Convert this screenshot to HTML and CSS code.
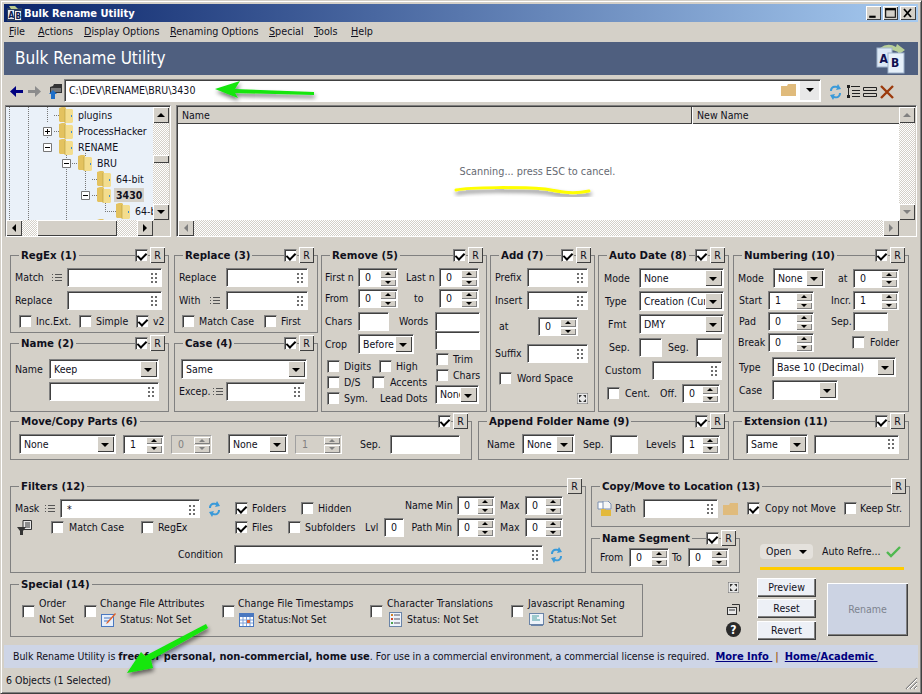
FILE: index.html
```html
<!DOCTYPE html>
<html lang="en">
<head>
<meta charset="utf-8">
<title>Bulk Rename Utility</title>
<link rel="stylesheet" href="styles.css">
</head>
<body>
<svg class="defs" width="0" height="0" aria-hidden="true">
  <symbol id="grip" viewBox="0 0 6 10"><path d="M0 0h2v2H0zM4 0h2v2H4zM0 4h2v2H0zM4 4h2v2H4zM0 8h2v2H0zM4 8h2v2H4z" fill="#6e6e6e"/></symbol>
  <symbol id="list" viewBox="0 0 10 8"><path d="M0 0h1v1H0zM3 0h7v1H3zM0 3h1v1H0zM3 3h7v1H3zM0 6h1v1H0zM3 6h7v1H3z" fill="#555"/></symbol>
  <symbol id="tfolder" viewBox="0 0 14 16"><path d="M0 1l3-1h3l1 1v14H1l-1-1z" fill="#e3c25f"/><path d="M6 2h7l1 1v12l-1 1H6z" fill="#f3dd8e"/><path d="M6 2v14" stroke="#b79a3c" stroke-width=".6"/><rect x="12" y="8" width="1" height="2" fill="#3a8ad0"/></symbol>
  <symbol id="refresh" viewBox="0 0 13 16"><path d="M1 7C1 3 4 1 8 2l1-2 3 5-5 1 1-2C5 3 3 4 3 7z" fill="#3a9ad9"/><path d="M12 9c0 4-3 6-7 5l-1 2-3-5 5-1-1 2c3 1 5 0 5-3z" fill="#3a9ad9"/></symbol>
  <symbol id="fit" viewBox="0 0 11 11"><rect width="11" height="11" fill="#e8e8e8"/><path d="M0 0h11v11H0z" fill="none" stroke="#666"/><path d="M2 2h3L2 5zM9 2v3L6 2zM2 9V6l3 3zM9 9H6l3-3z" fill="#333"/></symbol>
  <symbol id="flat" viewBox="0 0 15 12"><path d="M0 2h6l1-2h8v12H0z" fill="#e0bb7c"/></symbol>
</svg>
<div class="window">
  <header class="titlebar">
    <svg class="appicon" viewBox="0 0 15 15"><rect y="2" width="15" height="13" fill="#2b3e5f"/><rect x="1" y="4" width="6" height="9" fill="#dfe6ef"/><rect x="8" y="5" width="6" height="9" fill="#f2f2f2"/><path d="M2 0h6l3 3H4z" fill="#b9c98e"/><text x="1.5" y="11.5" class="appA">A</text><text x="8.5" y="12.5" class="appA">B</text></svg>
    <span class="titletext">Bulk Rename Utility</span>
    <span class="winbtns">
      <span class="wb"><svg viewBox="0 0 14 13"><rect x="3" y="9" width="6" height="2" fill="#000"/></svg></span>
      <span class="wb"><svg viewBox="0 0 14 13"><path d="M2.5 2.5h9v8h-9z" fill="none" stroke="#000"/><rect x="2" y="2" width="10" height="2"/></svg></span>
      <span class="wb wbx"><svg viewBox="0 0 16 13"><path d="M4 2.5l7 8M11 2.5l-7 8" stroke="#000" stroke-width="1.8"/></svg></span>
    </span>
  </header>
  <nav class="menubar">
    <span class="w-29"><u>F</u>ile</span><span class="w-46"><u>A</u>ctions</span><span class="w-86"><u>D</u>isplay Options</span><span class="w-99"><u>R</u>enaming Options</span><span class="w-45"><u>S</u>pecial</span><span class="w-37"><u>T</u>ools</span><span><u>H</u>elp</span>
  </nav>
  <div class="banner">
    <span class="bannertext">Bulk Rename Utility</span>
    <svg class="abicon" viewBox="0 0 30 30">
      <path d="M4 4q8-6 16-1l1-3 8 6-7 5v-3q-8-4-15 0z" fill="#b8cf98"/>
      <rect x="1" y="4" width="15" height="19" fill="#dce8f6" stroke="#9fb3cc"/>
      <rect x="12" y="9" width="16" height="20" fill="#e6f0fa" stroke="#9fb3cc"/>
      <text x="3.5" y="19" class="abA">A</text><text x="15" y="23" class="abA">B</text>
    </svg>
  </div>
  <div class="toolbar">
    <svg class="tool-back" viewBox="0 0 13 11"><path d="M0 5.5L6 0v4h7v3H6v4z" fill="#000080"/></svg>
    <svg class="tool-fwd" viewBox="0 0 13 11"><path d="M13 5.5L7 0v4H0v3h7v4z" fill="#8c8c8c"/></svg>
    <svg class="tool-up" viewBox="0 0 15 15"><path d="M2 3l3-1 1-2h8v9H2z" fill="#333"/><path d="M3 4h10v4H3z" fill="#777"/><path d="M5 6l4 4H7v5H3v-5H1z" fill="#1f6fc8"/></svg>
    <div class="address">
      <span class="addrtext">C:\DEV\RENAME\BRU\3430</span>
      <svg class="addrfolder"><use href="#flat"/></svg>
      <span class="addrdrop"><i class="tri"></i></span>
    </div>
    <svg class="tool-ref"><use href="#refresh"/></svg>
    <svg class="tool-tree" viewBox="0 0 13 14"><path d="M0 0h3v3H0zM0 10h3v3H0zM4 1h9v1H4zM5 5h8v1H5zM5 8h8v1H5zM5 11h8v1H5zM1 3h1v7H1z" fill="#222"/></svg>
    <svg class="tool-rows" viewBox="0 0 14 10"><path d="M.5.5h13v3H.5zM.5 6.5h13v3H.5z" fill="#d4d0c8" stroke="#222"/></svg>
    <svg class="tool-x" viewBox="0 0 14 14"><path d="M1 1l12 12M13 1L1 13" stroke="#9c3a0c" stroke-width="2.4"/></svg>
  </div>
  <div class="panes">
    <div class="pane tree">
      <div class="treeview">
        <svg class="treelines" width="147" height="113" viewBox="0 0 147 113">
          <path d="M3.5 0v113M22.5 0v113M41.5 0v16M41.5 30v2M60.5 46v67M79.5 46v38M99.5 94v9M48 8.5h5M48 24.5h5M86 72.5h5M66 56.5h5M86 88.5h5M99 104.5h11" stroke="#777" stroke-dasharray="1 1" fill="none"/>
          <path d="M37.5 20.5h8v8h-8zM37.5 36.5h8v8h-8zM56.5 52.5h8v8h-8zM75.5 84.5h8v8h-8z" fill="#fff" stroke="#777"/>
          <path d="M39 24.5h5M41.5 22v5M39 40.5h5M58 56.5h5M77 88.5h5" stroke="#000"/>
        </svg>
        <div class="node d1"><svg class="tf"><use href="#tfolder"/></svg><span class="nl">plugins</span></div>
        <div class="node d1"><svg class="tf"><use href="#tfolder"/></svg><span class="nl">ProcessHacker</span></div>
        <div class="node d1"><svg class="tf"><use href="#tfolder"/></svg><span class="nl">RENAME</span></div>
        <div class="node d2"><svg class="tf"><use href="#tfolder"/></svg><span class="nl">BRU</span></div>
        <div class="node d3"><svg class="tf"><use href="#tfolder"/></svg><span class="nl">64-bit</span></div>
        <div class="node d3"><svg class="tf"><use href="#tfolder"/></svg><span class="nl sel-node">3430</span></div>
        <div class="node d4"><svg class="tf"><use href="#tfolder"/></svg><span class="nl">64-bit</span></div>
        <div class="node d2b"><svg class="tf"><use href="#tfolder"/></svg></div>
      </div>
      <div class="vscroll">
        <span class="sbtn"><i class="tri up"></i></span>
        <span class="thumb-v"></span>
        <span class="sbtn end"><i class="tri"></i></span>
      </div>
      <div class="hscroll">
        <span class="sbtn"><i class="tri lf"></i></span>
        <span class="thumb-h"></span>
        <span class="sbtn end"><i class="tri rt"></i></span>
      </div>
      <div class="corner"></div>
    </div>
    <div class="pane list">
      <div class="listmain">
        <div class="listhead"><span class="colname">Name</span><span class="colnew">New Name</span></div>
        <div class="listbody">Scanning... press ESC to cancel.</div>
      </div>
      <div class="vscroll">
        <span class="sbtn"><i class="tri up dim"></i></span>
        <span class="sbtn end"><i class="tri dim"></i></span>
      </div>
      <div class="hscroll">
        <span class="sbtn"><i class="tri lf dim"></i></span>
        <span class="sbtn end"><i class="tri rt dim"></i></span>
      </div>
      <div class="corner"></div>
    </div>
  </div>

  <main class="panels">
    <section class="row-main">
      <div class="grid-left">
        <div class="panel p-regex">
          <span class="ttl">RegEx (1)</span><span class="ctl"><i class="cb on"></i><span class="rb">R</span></span>
          <div class="r"><span class="l ml-4 w-37">Match</span><svg class="li"><use href="#list"/></svg><span class="tb ml-5 w-95"><svg class="gr"><use href="#grip"/></svg></span></div>
          <div class="r mt-4"><span class="l ml-4 w-52">Replace</span><span class="tb w-95"><svg class="gr"><use href="#grip"/></svg></span></div>
          <div class="r mt-5"><i class="cb ml-8"></i><span class="l ml-4 w-39">Inc.Ext.</span><i class="cb ml-4"></i><span class="l ml-4 w-40">Simple</span><i class="cb on"></i><span class="l ml-4">v2</span></div>
        </div>
        <div class="panel p-replace">
          <span class="ttl">Replace (3)</span><span class="ctl"><i class="cb on"></i><span class="rb">R</span></span>
          <div class="r"><span class="l ml-4 w-47">Replace</span><span class="tb w-82"><svg class="gr"><use href="#grip"/></svg></span></div>
          <div class="r mt-4"><span class="l ml-4 w-31">With</span><svg class="li"><use href="#list"/></svg><span class="tb ml-6 w-82"><svg class="gr"><use href="#grip"/></svg></span></div>
          <div class="r mt-5"><i class="cb ml-7"></i><span class="l ml-4 w-65">Match Case</span><i class="cb"></i><span class="l ml-4">First</span></div>
        </div>
        <div class="panel p-name">
          <span class="ttl">Name (2)</span><span class="ctl"><i class="cb on"></i><span class="rb">R</span></span>
          <div class="r"><span class="l ml-4 w-34">Name</span><span class="sel w-110">Keep<i class="arrow"></i></span></div>
          <div class="r mt-3"><span class="tb ml-38 w-110"><svg class="gr"><use href="#grip"/></svg></span></div>
        </div>
        <div class="panel p-name">
          <span class="ttl">Case (4)</span><span class="ctl"><i class="cb on"></i><span class="rb">R</span></span>
          <div class="r"><span class="sel ml-6 w-126">Same<i class="arrow"></i></span></div>
          <div class="r mt-3"><span class="l ml-4 w-34">Excep.</span><svg class="li"><use href="#list"/></svg><span class="tb ml-3 w-79"><svg class="gr"><use href="#grip"/></svg></span></div>
        </div>
      </div>

      <div class="panel p-remove">
        <span class="ttl">Remove (5)</span><span class="ctl"><i class="cb on"></i><span class="rb">R</span></span>
        <div class="r"><span class="l ml-3 w-33">First n</span><span class="spin w-40">0<b class="sb"><i></i><i></i></b></span><span class="l ml-8 w-33">Last n</span><span class="spin w-40">0<b class="sb"><i></i><i></i></b></span></div>
        <div class="r mt-2"><span class="l ml-3 w-33">From</span><span class="spin w-40">0<b class="sb"><i></i><i></i></b></span><span class="l ml-16 w-25">to</span><span class="spin w-40">0<b class="sb"><i></i><i></i></b></span></div>
        <div class="r mt-4"><span class="l ml-3 w-33">Chars</span><span class="tb w-31"></span><span class="l ml-10 w-36">Words</span><span class="tb w-45"></span></div>
        <div class="rem-split">
          <div class="rem-left">
            <div class="r mt-3"><span class="l ml-3 w-33">Crop</span><span class="sel w-56">Before<i class="arrow"></i></span></div>
            <div class="r mt-6"><i class="cb ml-5"></i><span class="l ml-4 w-35">Digits</span><i class="cb"></i><span class="l ml-4">High</span></div>
            <div class="r mt-3"><i class="cb ml-5"></i><span class="l ml-4 w-28">D/S</span><i class="cb"></i><span class="l ml-5">Accents</span></div>
            <div class="r mt-3"><i class="cb ml-5"></i><span class="l ml-4 w-36">Sym.</span><span class="l">Lead Dots</span></div>
          </div>
          <div class="rem-right">
            <div class="r"><span class="tb w-45"></span></div>
            <div class="r mt-3"><i class="cb ml-1"></i><span class="l ml-4">Trim</span></div>
            <div class="r mt-3"><i class="cb ml-1"></i><span class="l ml-4">Chars</span></div>
            <div class="r mt-3"><span class="sel w-44 h-19"><span class="clip">None</span><i class="arrow"></i></span></div>
          </div>
        </div>
      </div>

      <div class="panel p-add">
        <span class="ttl">Add (7)</span><span class="ctl"><i class="cb on"></i><span class="rb">R</span></span>
        <div class="r"><span class="l ml-4 w-32">Prefix</span><span class="tb w-61"><svg class="gr"><use href="#grip"/></svg></span></div>
        <div class="r mt-4"><span class="l ml-4 w-32">Insert</span><span class="tb w-61"><svg class="gr"><use href="#grip"/></svg></span></div>
        <div class="r mt-7"><span class="l ml-8 w-39">at</span><span class="spin w-40">0<b class="sb"><i></i><i></i></b></span></div>
        <div class="r mt-8"><span class="l ml-4 w-32">Suffix</span><span class="tb w-61"><svg class="gr"><use href="#grip"/></svg></span></div>
        <div class="r mt-9"><i class="cb ml-8"></i><span class="l ml-5">Word Space</span></div>
        <div class="r mt-8"><svg class="fit ml-86"><use href="#fit"/></svg></div>
      </div>

      <div class="panel p-date">
        <span class="ttl">Auto Date (8)</span><span class="ctl"><i class="cb on"></i><span class="rb">R</span></span>
        <div class="r"><span class="l ml-5 w-35">Mode</span><span class="sel w-85">None<i class="arrow"></i></span></div>
        <div class="r mt-3"><span class="l ml-6 w-34">Type</span><span class="sel w-85"><span class="clip">Creation (Current)</span><i class="arrow"></i></span></div>
        <div class="r mt-3"><span class="l ml-9 w-31">Fmt</span><span class="sel w-85">DMY<i class="arrow"></i></span></div>
        <div class="r mt-4"><span class="l ml-10 w-30">Sep.</span><span class="tb w-23"></span><span class="l ml-6 w-28">Seg.</span><span class="tb w-26"></span></div>
        <div class="r mt-4"><span class="l ml-6 w-47">Custom</span><span class="tb w-70"><svg class="gr"><use href="#grip"/></svg></span></div>
        <div class="r mt-4"><i class="cb ml-8"></i><span class="l ml-5 w-35">Cent.</span><span class="l w-22">Off.</span><span class="spin w-38">0<b class="sb"><i></i><i></i></b></span></div>
      </div>

      <div class="panel p-num">
        <span class="ttl">Numbering (10)</span><span class="ctl"><i class="cb on"></i><span class="rb">R</span></span>
        <div class="r"><span class="l ml-4 w-35">Mode</span><span class="sel w-52">None<i class="arrow"></i></span><span class="l ml-13 w-15">at</span><span class="spin w-46">0<b class="sb"><i></i><i></i></b></span></div>
        <div class="r mt-3"><span class="l ml-5 w-29">Start</span><span class="spin w-46">1<b class="sb"><i></i><i></i></b></span><span class="l ml-17 w-22">Incr.</span><span class="spin w-46">1<b class="sb"><i></i><i></i></b></span></div>
        <div class="r mt-2"><span class="l ml-5 w-29">Pad</span><span class="spin w-46">0<b class="sb"><i></i><i></i></b></span><span class="l ml-17 w-22">Sep.</span><span class="tb w-35"></span></div>
        <div class="r mt-2"><span class="l ml-4 w-30">Break</span><span class="spin w-46">0<b class="sb"><i></i><i></i></b></span><i class="cb ml-38"></i><span class="l ml-5">Folder</span></div>
        <div class="r mt-5"><span class="l ml-5 w-33">Type</span><span class="sel w-124">Base 10 (Decimal)<i class="arrow"></i></span></div>
        <div class="r mt-3"><span class="l ml-5 w-33">Case</span><span class="sel w-66"><i class="arrow"></i></span></div>
      </div>
    </section>

    <section class="row-mid">
      <div class="panel p-move">
        <span class="ttl">Move/Copy Parts (6)</span><span class="ctl"><i class="cb on"></i><span class="rb">R</span></span>
        <div class="r"><span class="sel ml-8 w-97">None<i class="arrow"></i></span><span class="spin ml-7 w-41">1<b class="sb"><i></i><i></i></b></span><span class="spin dis ml-7 w-41">0<b class="sb"><i></i><i></i></b></span><span class="sel ml-16 w-60">None<i class="arrow"></i></span><span class="spin dis ml-7 w-47">1<b class="sb"><i></i><i></i></b></span><span class="l ml-18 w-30">Sep.</span><span class="tb w-70"></span></div>
      </div>
      <div class="panel p-append">
        <span class="ttl">Append Folder Name (9)</span><span class="ctl"><i class="cb on"></i><span class="rb">R</span></span>
        <div class="r"><span class="l ml-8 w-35">Name</span><span class="sel w-53">None<i class="arrow"></i></span><span class="l ml-8 w-27">Sep.</span><span class="tb w-28"></span><span class="l ml-8 w-36">Levels</span><span class="spin w-38">1<b class="sb"><i></i><i></i></b></span></div>
      </div>
      <div class="panel p-ext">
        <span class="ttl">Extension (11)</span><span class="ctl"><i class="cb on"></i><span class="rb">R</span></span>
        <div class="r"><span class="sel ml-12 w-62">Same<i class="arrow"></i></span><span class="tb ml-6 w-85"><svg class="gr"><use href="#grip"/></svg></span></div>
      </div>
    </section>

    <section class="row-filters">
      <div class="panel p-filters">
        <span class="ttl">Filters (12)</span><span class="ctl"><span class="rb">R</span></span>
        <div class="f-cols">
          <div class="f-col1">
            <div class="r"><span class="l ml-4 w-30">Mask</span><svg class="li"><use href="#list"/></svg><span class="tb ml-5 w-140 tbtext">*<svg class="gr"><use href="#grip"/></svg></span><svg class="ref ml-8"><use href="#refresh"/></svg></div>
            <div class="r mt-2 h-15">
              <svg class="ficon ml-6" viewBox="0 0 15 15"><path d="M6 .5h8.5v9H6z" fill="#e8e8e8" stroke="#333"/><path d="M8 3h5M8 5h5M8 7h5" stroke="#333"/><path d="M0 7h9L6 11v4H3v-4z" fill="#333"/></svg>
              <i class="cb ml-19"></i><span class="l ml-5 w-72">Match Case</span><i class="cb"></i><span class="l ml-4">RegEx</span>
            </div>
          </div>
          <div class="f-col2">
            <div class="r h-16"><i class="cb on"></i><span class="l ml-4 w-49">Folders</span><i class="cb"></i><span class="l ml-4">Hidden</span></div>
            <div class="r mt-2"><i class="cb on"></i><span class="l ml-4 w-36">Files</span><i class="cb"></i><span class="l ml-4 w-60">Subfolders</span><span class="l w-19">Lvl</span><span class="tb w-20 tbtext0">0</span></div>
          </div>
          <div class="f-col3">
            <div class="r"><span class="l lr w-52">Name Min</span><span class="spin w-38">0<b class="sb"><i></i><i></i></b></span><span class="l ml-5 w-25">Max</span><span class="spin w-38">0<b class="sb"><i></i><i></i></b></span></div>
            <div class="r mt-3"><span class="l lr w-52">Path Min</span><span class="spin w-38">0<b class="sb"><i></i><i></i></b></span><span class="l ml-5 w-25">Max</span><span class="spin w-38">0<b class="sb"><i></i><i></i></b></span></div>
          </div>
        </div>
        <div class="r mt-8"><span class="l ml-167 w-56">Condition</span><span class="tb w-309"><svg class="gr"><use href="#grip"/></svg></span><svg class="ref ml-7"><use href="#refresh"/></svg></div>
      </div>
      <div class="f-right">
        <div class="panel p-copy">
          <span class="ttl">Copy/Move to Location (13)</span><span class="ctl"><span class="rb">R</span></span>
          <div class="r">
            <svg class="picon ml-5" viewBox="0 0 15 15"><path d="M1 1h6l2 2v5H1z" fill="#fff" stroke="#7a8fb0"/><path d="M6 0h5l3 3v5H6z" fill="#f5f5f5" stroke="#7a8fb0"/><path d="M4 8h4l1 1h5v6H4z" fill="#e3b93c"/></svg>
            <span class="l ml-3 w-28">Path</span><span class="tb w-75"><svg class="gr"><use href="#grip"/></svg></span>
            <svg class="flatf ml-5"><use href="#flat"/></svg>
            <i class="cb on ml-9"></i><span class="l ml-5 w-79">Copy not Move</span><i class="cb"></i><span class="l ml-3">Keep Str.</span>
          </div>
        </div>
        <div class="f-right2">
          <div class="panel p-seg">
            <span class="ttl">Name Segment</span><span class="ctl"><i class="cb on"></i><span class="rb">R</span></span>
            <div class="r"><span class="l ml-8 w-29">From</span><span class="spin w-40">0<b class="sb"><i></i><i></i></b></span><span class="l ml-3 w-16">To</span><span class="spin w-41">0<b class="sb"><i></i><i></i></b></span></div>
          </div>
          <div class="openbox">
            <div class="r">
              <span class="openbtn">Open<i class="tri"></i></span>
              <span class="l ml-9 w-62">Auto Refre...</span>
              <svg class="okcheck" viewBox="0 0 15 12"><path d="M1 6l4 4 9-9" fill="none" stroke="#4fb84f" stroke-width="2.4"/></svg>
            </div>
            <div class="yellowbar"></div>
          </div>
        </div>
      </div>
    </section>

    <section class="row-special">
      <div class="panel p-special">
        <span class="ttl">Special (14)</span>
        <div class="sp-items">
          <div class="sp w-62 ml-11"><i class="cb"></i><div class="sp-text ml-4"><div class="sp-line">Order</div><div class="sp-line">Not Set</div></div></div>
          <div class="sp w-138"><i class="cb"></i><div class="sp-text ml-3"><div class="sp-line">Change File Attributes</div><div class="sp-line">
            <svg class="stat" viewBox="0 0 15 15"><rect x=".5" y="2.5" width="12" height="12" fill="#e6eefa" stroke="#4a78c0"/><path d="M3 6h7M3 9h5" stroke="#4a78c0"/><path d="M6 10l8-9 1 1-8 9-2 1z" fill="#e0602a"/></svg><span class="ml-4">Status: Not Set</span></div></div></div>
          <div class="sp w-148"><i class="cb"></i><div class="sp-text ml-3"><div class="sp-line">Change File Timestamps</div><div class="sp-line">
            <svg class="stat" viewBox="0 0 15 15"><rect x=".5" y="1.5" width="14" height="13" fill="#fff" stroke="#4a78c0"/><rect x="1" y="2" width="13" height="3" fill="#4a78c0"/><path d="M1 8h13M1 11h13M4 5v9M7.5 5v9M11 5v9" stroke="#7da0d8"/><rect x="8" y="8" width="3" height="3" fill="#e06030"/></svg><span class="ml-4">Status:Not Set</span></div></div></div>
          <div class="sp w-141"><i class="cb"></i><div class="sp-text ml-4"><div class="sp-line">Character Translations</div><div class="sp-line">
            <svg class="stat" viewBox="0 0 15 15"><rect x="1.5" y=".5" width="12" height="14" fill="#eef3fa" stroke="#6a84a8"/><path d="M6 3h6M6 7h6M6 11h6" stroke="#556"/><path d="M3 2h2v2H3z" fill="#d0802a"/><path d="M3 6h2v2H3z" fill="#d04a2a"/><path d="M3 10h2v2H3z" fill="#4aa04a"/></svg><span class="ml-4">Status: Not Set</span></div></div></div>
          <div class="sp"><i class="cb"></i><div class="sp-text ml-4"><div class="sp-line">Javascript Renaming</div><div class="sp-line">
            <svg class="stat" viewBox="0 0 15 15"><rect x=".5" y="1.5" width="14" height="11" fill="#eef3fa" stroke="#6a84a8"/><path d="M3 4h7M3 6h5M3 8h8" stroke="#4aa0a0"/><path d="M2 13h12v1H2z" fill="#6a84a8"/></svg><span class="ml-4">Status:Not Set</span></div></div></div>
        </div>
      </div>
      <div class="act-icons">
        <svg class="fit"><use href="#fit"/></svg>
        <svg class="winic" viewBox="0 0 13 11"><path d="M5 .5h7.5v7" fill="none" stroke="#333"/><rect x=".5" y="3.5" width="9" height="7" fill="#e8e8e8" stroke="#333"/><path d="M2 6h6" stroke="#333"/></svg>
        <svg class="help" viewBox="0 0 15 15"><circle cx="7.5" cy="7.5" r="7.5" fill="#2a2a2a"/><text x="7.5" y="11.5" class="helpq">?</text></svg>
      </div>
      <div class="act-btns">
        <span class="btn">Preview</span>
        <span class="btn">Reset</span>
        <span class="btn mt-1">Revert</span>
      </div>
      <div class="renamebtn">Rename</div>
    </section>
  </main>

  <div class="free">Bulk Rename Utility is&nbsp;<b>free for personal, non-commercial, home use</b>. For use in a commercial environment, a commercial license is required. <a class="lnk">More Info&nbsp;</a><span class="pipe">|</span><a class="lnk">Home/Academic&nbsp;</a></div>
  <footer class="status">6 Objects (1 Selected)
    <svg class="resize" viewBox="0 0 15 15"><path d="M14 3L3 14M14 7L7 14M14 11L11 14" stroke="#808080" stroke-width="1.2"/><path d="M14 4L4 14M14 8L8 14M14 12L12 14" stroke="#fff"/></svg>
  </footer>
</div>

<svg class="annot" width="922" height="694" viewBox="0 0 922 694">
  <defs><filter id="sh" x="-20%" y="-60%" width="140%" height="240%"><feGaussianBlur in="SourceAlpha" stdDeviation="2"/><feOffset dx="1" dy="3"/><feComponentTransfer><feFuncA type="linear" slope=".55"/></feComponentTransfer><feMerge><feMergeNode/><feMergeNode in="SourceGraphic"/></feMerge></filter></defs>
  <g filter="url(#sh)" fill="#12e60c">
    <path d="M215 89L240 81 235 89 314 92V95L235 93 238 98z"/>
    <path d="M127 673L141 652 145 656 206 624 208 628 151 660 153 668z"/>
  </g>
  <path d="M456 190C470 187 520 187 545 189 558 191 570 195 589 191" fill="none" stroke="#ffff00" stroke-width="3" stroke-linecap="round" filter="url(#sh)"/>
</svg>
</body>
</html>
```

FILE: styles.css
```css
* { box-sizing: border-box; }
html, body { margin: 0; padding: 0; }
body {
  width: 922px; height: 694px; overflow: hidden; position: relative;
  font-family: "DejaVu Sans Condensed", "DejaVu Sans", "Noto Sans", sans-serif;
  font-stretch: condensed; font-size: 10.5px; line-height: 1; color: #10101c;
  background: #d4d0c8;
}
i { display: block; font-style: normal; }
.defs { position: absolute; }
.annot { position: absolute; left: 0; top: 0; pointer-events: none; }

.window {
  width: 922px; height: 694px; display: flex; flex-direction: column; padding: 3px;
  border: 1px solid; border-color: #d4d0c8 #404040 #404040 #d4d0c8;
  box-shadow: inset 1px 1px #fff, inset -1px -1px #808080;
  background: #d4d0c8;
}

/* title bar */
.titlebar {
  height: 18px; display: flex; align-items: center; padding: 0 2px 0 3px; flex: none;
  background: linear-gradient(90deg, #0a246a, #a6caf0);
}
.appicon { width: 15px; height: 15px; }
.appA { font-size: 8px; font-weight: bold; fill: #0a1a50; }
.titletext { margin-left: 2px; color: #fff; font-weight: bold; font-size: 11px; }
.winbtns { margin-left: auto; display: flex; gap: 2px; }
.wb {
  width: 15px; height: 14px; background: #d4d0c8; display: block;
  box-shadow: inset 1px 1px #fff, inset -1px -1px #404040;
}
.wbx { width: 16px; }
.wb svg { display: block; width: 100%; height: 100%; }

/* menu */
.menubar { height: 20px; display: flex; align-items: center; padding-left: 5px; flex: none; font-size: 10.7px; }
.menubar span { display: block; }

/* banner */
.banner {
  height: 33px; background: #4f5f7f; display: flex; align-items: center; flex: none;
  padding: 0 12px 0 11px;
}
.bannertext { color: #fff; font-size: 17px; }
.abicon { width: 30px; height: 30px; margin-left: auto; }
.abA { font-size: 12px; font-weight: bold; fill: #101050; }

/* toolbar */
.toolbar { height: 30px; display: flex; align-items: center; flex: none; padding-left: 6px; }
.tool-back { width: 13px; height: 11px; margin-top: 2px; }
.tool-fwd { width: 13px; height: 11px; margin: 2px 0 0 5px; }
.tool-up { width: 15px; height: 15px; margin: 2px 0 0 7px; }
.address {
  width: 757px; height: 23px; margin-left: 1px; display: flex; align-items: center; background: #fff;
  border: 1px solid; border-color: #808080 #fff #fff #808080; box-shadow: inset 1px 1px #404040;
  padding-left: 4px; position: relative; top: 0;
}
.addrtext { font-size: 10.5px; }
.addrfolder { width: 15px; height: 12px; margin-left: auto; }
.addrdrop {
  width: 19px; height: 19px; margin: 0 1px 0 4px; background: #e8e8e8; display: flex;
  align-items: center; justify-content: center;
}
.tool-ref { width: 13px; height: 16px; margin: 3px 0 0 8px; }
.tool-tree { width: 13px; height: 14px; margin: 3px 0 0 5px; }
.tool-rows { width: 14px; height: 10px; margin: 3px 0 0 3px; }
.tool-x { width: 14px; height: 14px; margin: 3px 0 0 3px; }

/* triangles */
.tri {
  width: 0; height: 0; border-left: 4px solid transparent; border-right: 4px solid transparent;
  border-top: 4px solid #000;
}
.tri.up { border-top: 0; border-bottom: 4px solid #000; }
.tri.lf { border: 4px solid transparent; border-left: 0; border-right: 4px solid #000; }
.tri.rt { border: 4px solid transparent; border-right: 0; border-left: 4px solid #000; }
.tri.dim { border-top-color: #808080; }
.tri.up.dim { border-top-color: transparent; border-bottom-color: #808080; }
.tri.lf.dim { border-top-color: transparent; border-right-color: #808080; }
.tri.rt.dim { border-top-color: transparent; border-left-color: #808080; }

/* panes */
.panes { height: 132px; display: flex; flex: none; padding-left: 1px; }
.pane {
  display: grid; grid-template-columns: 1fr 16px; grid-template-rows: 1fr 16px; height: 132px;
  border: 1px solid; border-color: #808080 #fff #fff #808080; box-shadow: inset 1px 1px #404040;
  padding: 1px 1px 0 1px;
}
.tree { width: 166px; padding-left: 0; }
.list { width: 741px; margin-left: 5px; }
.treeview { position: relative; overflow: hidden; background: #eaf1f9; }
.treelines { position: absolute; left: 0; top: 0; }
.node { height: 16px; display: flex; align-items: center; white-space: nowrap; position: relative; }
.node.d1 { padding-left: 53px; }
.node.d2 { padding-left: 72px; }
.node.d3 { padding-left: 91px; }
.node.d4 { padding-left: 110px; }
.node.d2b { padding-left: 91px; }
.tf { width: 14px; height: 16px; flex: none; }
.nl { margin-left: 5px; font-size: 10.5px; padding: 2px 0; }
.sel-node { background: #d4d0c8; font-weight: bold; margin-left: 3px; padding: 2px 2px; }
.vscroll {
  display: flex; flex-direction: column;
  background: repeating-conic-gradient(#d4d0c8 0 25%, #fff 0 50%) 0 0 / 2px 2px;
}
.hscroll {
  display: flex;
  background: repeating-conic-gradient(#d4d0c8 0 25%, #fff 0 50%) 0 0 / 2px 2px;
}
.corner { background: #d4d0c8; }
.sbtn {
  width: 16px; height: 16px; background: #d4d0c8; display: flex; align-items: center; justify-content: center; flex: none;
  box-shadow: inset 1px 1px #fff, inset -1px -1px #404040;
}
.sbtn.end { margin: auto 0 0 auto; }
.thumb-v { height: 8px; margin-top: 32px; background: #d4d0c8; box-shadow: inset 1px 1px #fff, inset -1px -1px #404040; }
.thumb-h { width: 80px; margin-left: 15px; background: #d4d0c8; box-shadow: inset 1px 1px #fff, inset -1px -1px #404040; }
.listmain { display: flex; flex-direction: column; min-width: 0; }
.listhead { height: 17px; display: flex; background: #d4d0c8; box-shadow: inset 0 -1px #404040; flex: none; align-items: center; }
.colname { width: 514px; padding-left: 4px; height: 17px; line-height: 16px; border-right: 1px solid #404040; box-shadow: 1px 0 #fff; }
.colnew { padding-left: 5px; }
.listbody { flex: 1; background: #fff; display: flex; align-items: center; justify-content: center; color: #666a72; font-size: 10.8px; padding-right: 2px; }

/* panels */
.panels { flex: 1; padding-left: 6px; display: flex; flex-direction: column; }
.panel { border: 1px solid #808080; position: relative; padding-top: 12px; flex: none; }
.ttl { position: absolute; left: 8px; top: -6px; padding: 0 2px; background: #d4d0c8; font-weight: bold; font-size: 11.35px; white-space: nowrap; }
.ctl { position: absolute; right: 3px; top: -9px; display: flex; align-items: center; gap: 2px; }
.rb {
  width: 15px; height: 16px; display: flex; align-items: center; justify-content: center; background: #d4d0c8;
  box-shadow: inset 1px 1px #fff, inset -1px -1px #404040;
}
.r { display: flex; align-items: center; }
.row-main { display: flex; margin-top: 18px; height: 157px; flex: none; }
.grid-left { display: grid; grid-template-columns: 159px 144px; grid-template-rows: 78px 69px; column-gap: 5px; row-gap: 10px; }
.p-name { padding-top: 15px; }
.p-remove { width: 166px; margin-left: 3px; }
.p-add { width: 105px; margin-left: 3px; }
.p-date { width: 131px; margin-left: 3px; }
.p-num { width: 176px; margin-left: 4px; }
.rem-split { display: flex; }
.rem-left { width: 113px; }
.row-mid { display: flex; margin-top: 9px; height: 39px; flex: none; }
.p-move { width: 462px; }
.p-append { width: 251px; margin-left: 6px; }
.p-ext { width: 176px; margin-left: 4px; }
.row-filters { display: flex; margin-top: 26px; height: 87px; flex: none; }
.p-filters { width: 576px; padding-top: 9px; }
.f-cols { display: flex; height: 41px; }
.f-col1 { width: 224px; margin-top: 3px; }
.f-col2 { width: 170px; margin-top: 4px; }
.f-right { margin-left: 5px; }
.p-copy { width: 319px; height: 41px; }
.f-right2 { display: flex; margin-top: 11px; }
.p-seg { width: 149px; height: 35px; padding-top: 9px; }
.openbox { margin-left: 20px; padding-top: 6px; }
.openbtn {
  width: 53px; height: 15px; background: #e4e1dc; border-radius: 4px; display: flex; align-items: center;
  justify-content: space-between; padding: 0 6px;
}
.yellowbar { width: 144px; height: 3px; margin-top: 8px; background: #ffcc00; }
.okcheck { width: 15px; height: 12px; margin-left: 2px; }
.row-special { display: flex; margin-top: 5px; height: 67px; flex: none; }
.p-special { width: 633px; height: 53px; margin-top: 6px; padding-top: 10px; }
.sp-items { display: flex; }
.sp { display: flex; align-items: center; flex: none; }
.sp-line { height: 16px; display: flex; align-items: center; white-space: nowrap; padding-left: 0; }
.stat { width: 15px; height: 15px; margin-left: 1px; flex: none; }
.act-icons { width: 15px; margin-left: 83px; display: flex; flex-direction: column; align-items: center; padding-top: 4px; flex: none; }
.act-icons .fit { width: 11px; height: 11px; }
.winic { width: 13px; height: 11px; margin-top: 11px; }
.help { width: 15px; height: 15px; margin-top: 7px; }
.helpq { font-size: 12px; font-weight: bold; fill: #fff; text-anchor: middle; }
.act-btns { margin-left: 16px; display: flex; flex-direction: column; gap: 2px; flex: none; }
.btn {
  width: 59px; height: 19px; display: flex; align-items: center; justify-content: center; background: #edf0f6;
  box-shadow: inset 1px 1px #fff, inset -1px -1px #404040, inset -2px -2px #808080;
}
.renamebtn {
  width: 81px; height: 53px; margin: 5px 0 0 11px; background: #ccd3e3; color: #7e8490; display: flex;
  align-items: center; justify-content: center;
  box-shadow: inset 1px 1px #fff, inset -1px -1px #404040, inset -2px -2px #808080;
}

/* controls */
.l { display: block; white-space: nowrap; flex: none; }
.lr { text-align: right; padding-right: 5px; }
.tb {
  height: 19px; display: flex; align-items: center; justify-content: flex-end; background: #fff; flex: none;
  border: 1px solid; border-color: #808080 #fff #fff #808080; box-shadow: inset 1px 1px #404040;
  padding-right: 4px;
}
.gr { width: 6px; height: 10px; flex: none; }
.tbtext { justify-content: space-between; padding: 2px 4px 0 6px; }
.tbtext0 { justify-content: center; padding: 0; }
.li { width: 10px; height: 8px; flex: none; }
.spin {
  height: 19px; display: flex; align-items: center; background: #fff; flex: none; padding-left: 6px; position: relative;
  border: 1px solid; border-color: #808080 #fff #fff #808080; box-shadow: inset 1px 1px #404040;
}
.sb { position: absolute; right: 1px; top: 1px; bottom: 0; width: 16px; display: flex; flex-direction: column; gap: 1px; font-weight: normal; }
.sb i {
  flex: 1; background: #d4d0c8; position: relative;
  box-shadow: inset 1px 1px #fff, inset -1px -1px #808080;
}
.sb i::after {
  content: ""; position: absolute; left: 5px; top: 2px; border-left: 3px solid transparent; border-right: 3px solid transparent;
  border-bottom: 3px solid #000;
}
.sb i + i::after { border-bottom: 0; border-top: 3px solid #000; }
.spin.dis { background: #d4d0c8; color: #808080; box-shadow: none; border-color: #a0a0a0 #fff #fff #a0a0a0; }
.spin.dis .sb i::after { border-bottom-color: #808080; border-top-color: #808080; }
.sel {
  height: 20px; display: flex; align-items: center; background: #fff; flex: none; padding-left: 4px; position: relative;
  border: 1px solid; border-color: #808080 #fff #fff #808080; box-shadow: inset 1px 1px #404040; white-space: nowrap;
}
.arrow {
  position: absolute; right: 1px; top: 1px; bottom: 1px; width: 17px; background: #d4d0c8;
  box-shadow: inset 1px 1px #fff, inset -1px -1px #404040;
}
.arrow::after {
  content: ""; position: absolute; left: 4px; top: 7px; border-left: 4px solid transparent; border-right: 4px solid transparent;
  border-top: 4px solid #000;
}
.clip { display: block; overflow: hidden; width: calc(100% - 18px); }
.cb {
  width: 13px; height: 13px; background: #fff; flex: none; position: relative; display: block;
  border: 1px solid; border-color: #808080 #d4d0c8 #d4d0c8 #808080; box-shadow: inset 1px 1px #404040;
}
.cb.on::after {
  content: ""; position: absolute; left: 3px; top: 1px; width: 4px; height: 7px;
  border: solid #000; border-width: 0 2px 2px 0; transform: rotate(45deg);
}
.fit { width: 11px; height: 11px; flex: none; }
.ref { width: 13px; height: 16px; flex: none; }
.ficon { width: 15px; height: 15px; flex: none; }
.picon { width: 15px; height: 15px; flex: none; }
.flatf { width: 15px; height: 12px; flex: none; }

/* footer */
.free {
  height: 23px; background: #ced5e6; flex: none; display: flex; align-items: center; padding-left: 9px; white-space: pre; margin-top: 0;
  letter-spacing: -.06px;
}
.free b { font-size: 11px; letter-spacing: 0; }
.lnk { color: #000080; font-weight: bold; font-size: 11px; letter-spacing: 0; text-decoration: underline; margin-left: 3px; }
.pipe { color: #a06020; margin: 0 3px; font-weight: bold; }
.status { height: 22px; display: flex; align-items: center; padding: 3px 0 0 2px; flex: none; position: relative; }
.resize { width: 15px; height: 15px; margin: auto 0 0 auto; }

/* utilities */
.h-15 { height: 15px; } .h-16 { height: 16px; } .h-19 { height: 19px; }
.mt-1 { margin-top: 1px; } .mt-2 { margin-top: 2px; } .mt-3 { margin-top: 3px; } .mt-4 { margin-top: 4px; } .mt-5 { margin-top: 5px; }
.mt-6 { margin-top: 6px; } .mt-7 { margin-top: 7px; } .mt-8 { margin-top: 8px; } .mt-9 { margin-top: 9px; }
.ml-1 { margin-left: 1px; } .ml-3 { margin-left: 3px; } .ml-4 { margin-left: 4px; } .ml-5 { margin-left: 5px; } .ml-6 { margin-left: 6px; }
.ml-7 { margin-left: 7px; } .ml-8 { margin-left: 8px; } .ml-9 { margin-left: 9px; } .ml-10 { margin-left: 10px; } .ml-11 { margin-left: 11px; }
.ml-12 { margin-left: 12px; } .ml-13 { margin-left: 13px; } .ml-16 { margin-left: 16px; } .ml-17 { margin-left: 17px; } .ml-18 { margin-left: 18px; }
.ml-19 { margin-left: 19px; } .ml-38 { margin-left: 38px; } .ml-86 { margin-left: 86px; } .ml-167 { margin-left: 167px; }
.w-15 { width: 15px; } .w-16 { width: 16px; } .w-19 { width: 19px; } .w-20 { width: 20px; } .w-22 { width: 22px; } .w-23 { width: 23px; }
.w-25 { width: 25px; } .w-26 { width: 26px; } .w-27 { width: 27px; } .w-28 { width: 28px; } .w-29 { width: 29px; } .w-30 { width: 30px; }
.w-31 { width: 31px; } .w-32 { width: 32px; } .w-33 { width: 33px; } .w-34 { width: 34px; } .w-35 { width: 35px; } .w-36 { width: 36px; }
.w-37 { width: 37px; } .w-38 { width: 38px; } .w-39 { width: 39px; } .w-40 { width: 40px; } .w-41 { width: 41px; } .w-44 { width: 44px; }
.w-45 { width: 45px; } .w-46 { width: 46px; } .w-47 { width: 47px; } .w-49 { width: 49px; } .w-52 { width: 52px; } .w-53 { width: 53px; }
.w-56 { width: 56px; } .w-60 { width: 60px; } .w-61 { width: 61px; } .w-62 { width: 62px; } .w-65 { width: 65px; } .w-66 { width: 66px; }
.w-70 { width: 70px; } .w-72 { width: 72px; } .w-75 { width: 75px; } .w-79 { width: 79px; } .w-82 { width: 82px; } .w-85 { width: 85px; }
.w-86 { width: 86px; } .w-95 { width: 95px; } .w-97 { width: 97px; } .w-99 { width: 99px; } .w-110 { width: 110px; } .w-124 { width: 124px; }
.w-126 { width: 126px; } .w-138 { width: 138px; } .w-140 { width: 140px; } .w-141 { width: 141px; } .w-148 { width: 148px; } .w-309 { width: 309px; }
```
